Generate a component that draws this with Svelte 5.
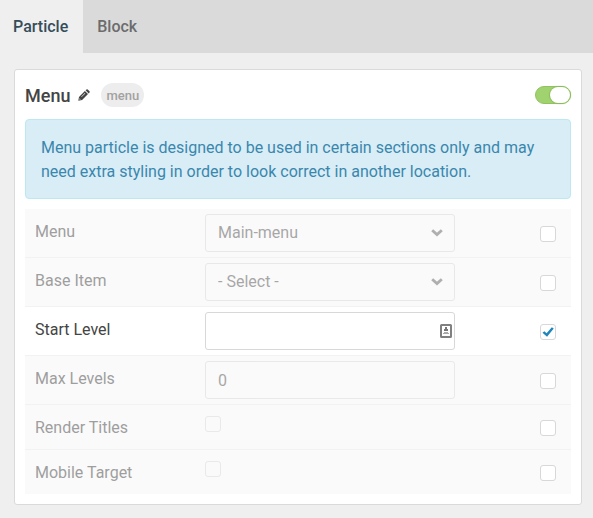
<script>
  const tabs = ['Particle', 'Block'];
  let active = $state('Particle');

  let fields = $state([
    { id: 'menu', label: 'Menu', type: 'select', options: ['Main-menu'], override: false },
    { id: 'base', label: 'Base Item', type: 'select', options: ['- Select -'], override: false },
    { id: 'start', label: 'Start Level', type: 'text', value: '', override: true },
    { id: 'max', label: 'Max Levels', type: 'text', value: '0', override: false },
    { id: 'titles', label: 'Render Titles', type: 'checkbox', override: false },
    { id: 'target', label: 'Mobile Target', type: 'checkbox', override: false }
  ]);
</script>

<div class="page">
  <div class="tabs" role="tablist">
    {#each tabs as tab}
      <button
        class="tab"
        class:active={tab === active}
        role="tab"
        aria-selected={tab === active}
        onclick={() => (active = tab)}>{tab}</button>
    {/each}
  </div>

  <section class="card">
    <header>
      <h1>Menu</h1>
      <button class="edit" aria-label="Edit title">
        <svg viewBox="0 0 12 12" width="12" height="12">
          <path fill="#444" fill-rule="evenodd" d="M0.3 11.7 L1 7.9 L6.9 2 L10 5.1 L4.1 11 Z M1.6 9.2 L1.4 10.6 L2.8 10.4 Z M3.2 7.7 L3.6 8.1 L7.3 4.4 L6.9 4 Z" />
          <path fill="#444" d="M7.6 1.3 L8.5 0.5 Q9.1 0 9.7 0.5 L11.5 2.3 Q12 2.9 11.5 3.5 L10.7 4.4 Z" />
        </svg>
      </button>
      <span class="badge">menu</span>
      <input class="toggle" type="checkbox" role="switch" aria-label="Enabled" checked />
    </header>

    <p class="alert">
      Menu particle is designed to be used in certain sections only and may need extra styling in order to look correct in another location.
    </p>

    <div class="rows">
      {#each fields as field (field.id)}
        <div class="row" class:on={field.override}>
          <label class="name" for={field.id}>{field.label}</label>
          <div class="control">
            {#if field.type === 'select'}
              <select id={field.id}>
                {#each field.options as option}
                  <option>{option}</option>
                {/each}
              </select>
              <svg class="chevron" viewBox="0 0 12 8" width="12" height="8">
                <path d="M1.2 1.2 L6 5.6 L10.8 1.2" fill="none" stroke="#666" stroke-width="2.8" />
              </svg>
            {:else if field.type === 'text'}
              <input class="text" type="text" id={field.id} bind:value={field.value} />
              {#if field.override}
                <svg class="autofill" viewBox="0 0 12 14" width="12" height="14">
                  <rect x="1" y="1" width="10" height="12" rx="0.5" fill="#fff" stroke="#808080" stroke-width="2" />
                  <path fill="#777" d="M5 3 H7 V5 H8 V7 H4 V5 H5 Z" />
                  <path fill="#aaa" d="M4 8 H8 V9 H9 V10 H3 V9 H4 Z" />
                </svg>
              {/if}
            {:else}
              <input class="check" type="checkbox" id={field.id} />
            {/if}
          </div>
          <input
            class="check override"
            type="checkbox"
            aria-label={`Override ${field.label}`}
            bind:checked={field.override} />
        </div>
      {/each}
    </div>
  </section>
</div>

<style>
  :global(body) {
    background: #efefef;
  }
  .page {
    font-family: Roboto, sans-serif;
    font-size: 16px;
    line-height: 24px;
    color: #444;
    padding-bottom: 13px;
  }
  .page :global(*) {
    box-sizing: border-box;
  }
  button,
  input,
  select {
    font: inherit;
    margin: 0;
  }
  .tabs {
    display: flex;
    background: #dadada;
  }
  .tab {
    border: 0;
    background: none;
    height: 53px;
    padding: 0 14px;
    font-weight: 500;
    color: #6c6c6c;
  }
  .tab.active {
    background: #efefef;
    color: #354d59;
    padding: 0 15px 0 13px;
  }
  .card {
    margin: 16px 11px 0 14px;
    padding: 10px;
    background: #fff;
    border: 1px solid #dadada;
    border-radius: 3px;
  }
  header {
    display: flex;
    align-items: center;
    height: 30px;
    margin-bottom: 9px;
  }
  h1 {
    margin: 0;
    padding-top: 2px;
    font-size: 18px;
    font-weight: 500;
  }
  .edit {
    display: flex;
    border: 0;
    background: none;
    padding: 0;
    margin: 0 11px 0 8px;
  }
  .badge {
    padding: 1px 5px 0;
    border-radius: 12px;
    background: #ededed;
    color: #a2a2a2;
    font-size: 13px;
    line-height: 23px;
    font-weight: 500;
  }
  .toggle {
    appearance: none;
    margin-left: auto;
    width: 36px;
    height: 18px;
    border-radius: 9px;
    border: 1px solid #91c25f;
    background: #a0d36f;
    display: flex;
  }
  .toggle::after {
    content: '';
    width: 20px;
    height: 16px;
    border-radius: 8px;
    background: #fff;
    box-shadow: 0 0 1px 1px #8cbb5d;
  }
  .toggle:checked::after {
    margin-left: auto;
  }
  .alert {
    margin: 0 0 10px;
    padding: 16px 15px 14px;
    background: #d9edf7;
    border: 1px solid #bce8f1;
    border-radius: 4px;
    color: #3a87ad;
  }
  .row {
    display: grid;
    grid-template-columns: 170px 250px 1fr;
    padding: 5px 15px 5px 10px;
    background: #fafafa;
    border-bottom: 1px solid #f2f2f2;
  }
  .row:last-child {
    border-bottom: 0;
  }
  .row.on {
    background: #fff;
  }
  .name {
    padding: 6px 0 4px;
  }
  .control {
    position: relative;
    display: flex;
    align-items: flex-start;
  }
  .row:not(.on) .name,
  .row:not(.on) .control {
    opacity: 0.5;
  }
  select,
  .text {
    appearance: none;
    width: 100%;
    height: 38px;
    padding: 0 12px;
    border: 1px solid #d8d8d8;
    border-radius: 3px;
    background: transparent;
    color: #555;
  }
  .chevron {
    position: absolute;
    right: 12px;
    top: 15px;
  }
  .autofill {
    position: absolute;
    right: 3px;
    top: 12px;
  }
  .check {
    appearance: none;
    width: 16px;
    height: 16px;
    border: 1px solid #d8d8d8;
    border-radius: 3px;
    display: grid;
    place-items: center;
  }
  .control .check {
    margin-top: 6px;
  }
  .override {
    align-self: center;
    justify-self: end;
    margin-top: 2px;
    background: #fff;
  }
  .check:checked::after {
    content: '';
    width: 12px;
    height: 10px;
    background: #1e86bb;
    clip-path: polygon(4% 58%, 20% 42%, 38% 62%, 82% 2%, 98% 14%, 42% 98%);
  }
</style>
